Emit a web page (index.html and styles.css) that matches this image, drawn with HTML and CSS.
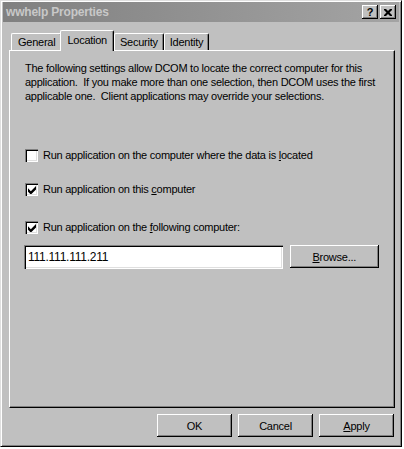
FILE: index.html
```html
<!DOCTYPE html>
<html lang="en">
<head>
  <meta charset="UTF-8" />
  <title>wwhelp Properties</title>
  <link rel="stylesheet" href="styles.css">
</head>
<body>

  <div class="window">
    <div class="titlebar">
      <span class="title">wwhelp Properties</span>
      <div class="title-buttons">
        <span class="tbtn">?</span>
        <span class="tbtn tbtn-close">
          <svg width="8" height="7" viewBox="0 0 8 7"><path d="M0 0h2l2 2 2-2h2v1l-2.5 2.5L8 6v1H6L4 5 2 7H0V6l2.5-2.5L0 1z" fill="#000"/></svg>
        </span>
      </div>
    </div>

    <div class="tabs">
      <span class="tab">General</span>
      <span class="tab tab-active">Location</span>
      <span class="tab">Security</span>
      <span class="tab">Identity</span>
    </div>

    <div class="panel">
      <p class="intro">The following settings allow DCOM to locate the correct computer for this application.&nbsp; If you make more than one selection, then DCOM uses the first applicable one.&nbsp; Client applications may override your selections.</p>

      <div class="check-row row-first">
        <span class="checkbox"></span>
        <span>Run application on the computer where the data is <u>l</u>ocated</span>
      </div>

      <div class="check-row row-second">
        <span class="checkbox checked">
          <svg width="8" height="8" viewBox="0 0 7 7"><path d="M0 2v3l2 2h1l4-4V0L2.5 4.5z" fill="#000"/></svg>
        </span>
        <span>Run application on this <u>c</u>omputer</span>
      </div>

      <div class="check-row row-third">
        <span class="checkbox checked">
          <svg width="8" height="8" viewBox="0 0 7 7"><path d="M0 2v3l2 2h1l4-4V0L2.5 4.5z" fill="#000"/></svg>
        </span>
        <span>Run application on the <u>f</u>ollowing computer:</span>
      </div>

      <div class="computer-row">
        <div class="textbox">111.111.111.211</div>
        <div class="btn btn-browse"><span><u>B</u>rowse...</span></div>
      </div>
    </div>

    <div class="actions">
      <div class="btn btn-action">OK</div>
      <div class="btn btn-action">Cancel</div>
      <div class="btn btn-action"><span><u>A</u>pply</span></div>
    </div>
  </div>

</body>
</html>
```

FILE: styles.css
```css
body {
  margin: 0;
  background: #ffffff;
  font-family: 'Liberation Sans', Arial, sans-serif;
  font-size: 11px;
  letter-spacing: -0.25px;
  color: #000;
}

.window {
  width: 402px;
  height: 447px;
  box-sizing: border-box;
  background: #c0c0c0;
  border-top: 1px solid #dfdfdf;
  border-left: 1px solid #dfdfdf;
  border-right: 1px solid #000;
  border-bottom: 1px solid #000;
  box-shadow: inset 1px 1px 0 #ffffff, inset -1px -1px 0 #808080;
  padding: 1px 2px 2px 2px;
}

.titlebar {
  height: 20px;
  background: linear-gradient(to right, #808080, #a4a4a4);
  display: flex;
  align-items: center;
  justify-content: space-between;
  padding: 0 3px 0 3px;
}

.title {
  color: #c8c8c8;
  font-weight: bold;
  font-size: 12px;
  letter-spacing: -0.2px;
}

.title-buttons {
  display: flex;
  gap: 2px;
}

.tbtn {
  width: 16px;
  height: 14px;
  box-sizing: border-box;
  background: #c0c0c0;
  box-shadow: inset -1px -1px 0 #000, inset 1px 1px 0 #fff, inset -2px -2px 0 #808080;
  display: flex;
  align-items: center;
  justify-content: center;
  font-weight: bold;
  font-size: 11px;
  line-height: 1;
}

.tabs {
  display: flex;
  align-items: flex-end;
  height: 21px;
  margin-top: 7px;
  padding-left: 8px;
}

.tab {
  height: 17px;
  box-sizing: border-box;
  padding: 2px 5px 0 5px;
  border-top: 1px solid #fff;
  border-left: 1px solid #fff;
  border-right: 1px solid #000;
  border-radius: 2px 2px 0 0;
  box-shadow: inset -1px 0 0 #808080;
  line-height: 13px;
}

.tab:first-child {
  padding: 2px 6px 0 6px;
}

.tab-active {
  height: 21px;
  padding: 3px 6px 0 6px;
  margin: 0 -1px -1px -2px;
  position: relative;
  background: #c0c0c0;
  z-index: 1;
}

.tab-active + .tab {
  margin-left: 1px;
}

.panel {
  margin-left: 6px;
  width: 386px;
  height: 358px;
  box-sizing: border-box;
  border-top: 1px solid #fff;
  border-left: 1px solid #fff;
  border-right: 1px solid #000;
  border-bottom: 1px solid #000;
  box-shadow: inset -1px -1px 0 #808080;
  padding: 10px 15px 0 15px;
}

.intro {
  margin: 0;
  line-height: 14px;
  width: 352px;
}

.check-row {
  display: flex;
  align-items: center;
  gap: 5px;
  height: 14px;
}

.row-first {
  margin-top: 45px;
}

.row-second {
  margin-top: 20px;
}

.row-third {
  margin-top: 24px;
}

.checkbox {
  width: 13px;
  height: 13px;
  box-sizing: border-box;
  background: #fff;
  box-shadow: inset 1px 1px 0 #808080, inset 2px 2px 0 #000, inset -1px -1px 0 #fff, inset -2px -2px 0 #dfdfdf;
  display: flex;
  align-items: center;
  justify-content: center;
  padding: 1px 0 0 1px;
}

.computer-row {
  display: flex;
  align-items: flex-start;
  gap: 7px;
  margin-top: 11px;
}

.textbox {
  width: 260px;
  height: 24px;
  box-sizing: border-box;
  background: #fff;
  box-shadow: inset 1px 1px 0 #808080, inset 2px 2px 0 #000, inset -1px -1px 0 #fff, inset -2px -2px 0 #dfdfdf;
  padding: 5px 4px 0 4px;
  line-height: 14px;
  font-size: 12px;
  margin-left: -1px;
}

.btn {
  height: 23px;
  box-sizing: border-box;
  background: #c0c0c0;
  box-shadow: inset -1px -1px 0 #000, inset 1px 1px 0 #fff, inset -2px -2px 0 #808080;
  display: flex;
  align-items: center;
  justify-content: center;
}

.btn-browse {
  width: 90px;
}

.actions {
  display: flex;
  justify-content: flex-end;
  gap: 6px;
  margin-top: 6px;
  padding-right: 5px;
}

.btn-action {
  width: 75px;
}
```
